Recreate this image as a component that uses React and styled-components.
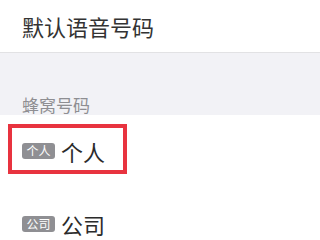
import React from 'react';
import styled, { createGlobalStyle } from 'styled-components';

const GlobalStyle = createGlobalStyle`
  html, body {
    margin: 0;
    padding: 0;
    background: #ffffff;
    font-family: "Noto Sans CJK SC", "Noto Sans", sans-serif;
  }
`;

const Page = styled.div`
  width: 320px;
  height: 240px;
  overflow: hidden;
  background: #ffffff;
`;

const Header = styled.div`
  height: 52px;
  display: flex;
  align-items: center;
  padding-left: 22px;
  border-bottom: 1px solid #e2e2e4;
`;

const Title = styled.div`
  font-size: 22px;
  color: #333333;
  line-height: 1;
`;

const Section = styled.div`
  height: 62px;
  box-sizing: border-box;
  background: #f2f2f6;
  display: flex;
  align-items: flex-end;
  padding: 0 0 2px 22px;
`;

const SectionLabel = styled.div`
  font-size: 17px;
  color: #8e8e92;
  line-height: 1;
`;

const Row = styled.div`
  position: relative;
  height: 73px;
  box-sizing: border-box;
  padding: 0 0 2px 22px;
  display: flex;
  align-items: center;
  gap: 6px;
`;

const Badge = styled.span`
  display: inline-flex;
  align-items: center;
  justify-content: center;
  width: 33px;
  height: 16px;
  border-radius: 3px;
  background: #8f8f93;
  color: #ffffff;
  font-size: 12px;
  line-height: 1;
`;

const Name = styled.span`
  font-size: 22px;
  color: #2b2b2b;
  line-height: 1;
`;

const Highlight = styled.div`
  position: absolute;
  left: 8px;
  top: 9px;
  width: 119px;
  height: 50px;
  box-sizing: border-box;
  border: 4px solid #e8333f;
  pointer-events: none;
`;

const numbers = [
  { id: 'personal', label: '个人', highlighted: true },
  { id: 'company', label: '公司', highlighted: false },
];

export default function App() {
  return (
    <Page>
      <GlobalStyle />
      <Header>
        <Title>默认语音号码</Title>
      </Header>
      <Section>
        <SectionLabel>蜂窝号码</SectionLabel>
      </Section>
      {numbers.map(item => (
        <Row key={item.id}>
          <Badge>{item.label}</Badge>
          <Name>{item.label}</Name>
          {item.highlighted && <Highlight />}
        </Row>
      ))}
    </Page>
  );
}
